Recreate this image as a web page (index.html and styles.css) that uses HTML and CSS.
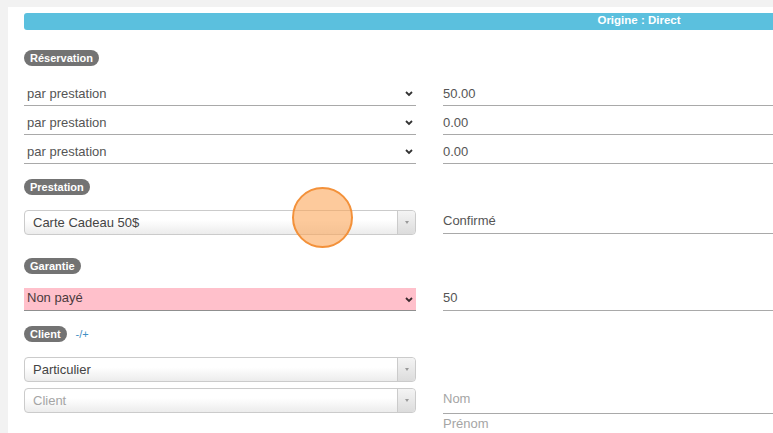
FILE: index.html
```html
<!DOCTYPE html>
<html lang="fr">
<head>
  <meta charset="UTF-8" />
  <title>Réservation</title>
  <link rel="stylesheet" href="styles.css">
</head>
<body>
  <div class="panel">
    <div class="origin"><span>Origine : Direct</span></div>

    <div class="group resa">
      <span class="tag">Réservation</span>
      <div class="grid">
        <div class="field line sel">par prestation
          <svg class="chev" width="8" height="6" viewBox="0 0 8 6"><polyline points="1,1 4,4 7,1" fill="none" stroke="#333" stroke-width="1.8"/></svg>
        </div>
        <div class="field line num">50.00</div>
        <div class="field line sel">par prestation
          <svg class="chev" width="8" height="6" viewBox="0 0 8 6"><polyline points="1,1 4,4 7,1" fill="none" stroke="#333" stroke-width="1.8"/></svg>
        </div>
        <div class="field line num">0.00</div>
        <div class="field line sel">par prestation
          <svg class="chev" width="8" height="6" viewBox="0 0 8 6"><polyline points="1,1 4,4 7,1" fill="none" stroke="#333" stroke-width="1.8"/></svg>
        </div>
        <div class="field line num">0.00</div>
      </div>
    </div>

    <div class="group presta">
      <span class="tag">Prestation</span>
      <div class="grid">
        <div class="combo"><span class="combo-text">Carte Cadeau 50$</span><span class="combo-arrow"><i></i></span></div>
        <div class="field line num mid">Confirmé</div>
      </div>
    </div>

    <div class="group garantie">
      <span class="tag">Garantie</span>
      <div class="grid">
        <div class="field line sel pink">Non payé
          <svg class="chev" width="8" height="6" viewBox="0 0 8 6"><polyline points="1,1 4,4 7,1" fill="none" stroke="#3a2a2e" stroke-width="1.8"/></svg>
        </div>
        <div class="field line num pinkrow">50</div>
      </div>
    </div>

    <div class="group client-group">
      <div class="tag-row"><span class="tag">Client</span><a class="toggle" href="#">-/+</a></div>
      <div class="grid client">
        <div class="combo first"><span class="combo-text">Particulier</span><span class="combo-arrow"><i></i></span></div>
        <div></div>
        <div class="combo"><span class="combo-text ph">Client</span><span class="combo-arrow"><i></i></span></div>
        <div class="field line num short ph">Nom</div>
        <div></div>
        <div class="field num short ph prenom">Prénom</div>
      </div>
    </div>
  </div>

  <div class="cursor"></div>
</body>
</html>
```

FILE: styles.css
```css
body {
  margin: 0;
  background: #f2f2f2;
  font-family: "Liberation Sans", Arial, sans-serif;
  color: #555;
  overflow: hidden;
}
.panel {
  margin: 7px 0 0 8px;
  width: 1300px;
  height: 440px;
  background: #fff;
  padding: 6px 0 0 16px;
  box-sizing: border-box;
}
.origin {
  width: 1230px;
  height: 17px;
  background: #5bc0de;
  border-radius: 3px 0 0 3px;
  color: #fff;
  font-size: 11.5px;
  font-weight: bold;
  line-height: 15px;
  text-align: center;
}
.group { margin-top: 15px; }
.resa { margin-top: 18px; }
.presta { margin-top: 13px; }
.garantie { margin-top: 21px; }
.client-group { margin-top: 15px; }
.tag {
  display: inline-block;
  background: #737373;
  color: #fff;
  font-size: 11px;
  font-weight: bold;
  line-height: 12px;
  padding: 2px 6px 2px;
  border-radius: 8px;
}
.tag-row { display: flex; align-items: center; gap: 9px; }
.toggle {
  color: #3f8fc4;
  font-size: 11px;
  text-decoration: none;
}
.grid {
  display: grid;
  grid-template-columns: 392px 392px;
  column-gap: 27px;
  margin-top: 15px;
}
.resa .grid { margin-top: 11px; }
.garantie .grid { margin-top: 14px; }
.field {
  position: relative;
  height: 29px;
  box-sizing: border-box;
  padding: 9px 3px 0;
  font-size: 13px;
  line-height: 16px;
  color: #555;
}
.field.num { padding-left: 0; }
.line { border-bottom: 1px solid #a9a9a9; }
.chev {
  position: absolute;
  right: 3px;
  top: 14px;
}
.mid { height: 24px; padding-top: 3px; }
.pink, .pinkrow { height: 23px; padding-top: 2px; }
.pink {
  background: #ffc0cb;
  color: #4a3a3d;
  border-bottom-color: #8f8f8f;
}
.pink .chev { top: 9px; }
.short { height: 26px; padding-top: 3px; }
.prenom { padding-top: 2px; }
.ph { color: #a5a5a5; }
.combo {
  display: flex;
  height: 25px;
  box-sizing: border-box;
  border: 1px solid #cbcbcb;
  border-radius: 4px;
  background: linear-gradient(#fff 40%, #ececec);
  font-size: 13px;
  line-height: 23px;
  color: #444;
}
.combo.first { margin-bottom: 6px; }
.combo-text { flex: 1; padding-left: 8px; }
.combo-text.ph { color: #a5a5a5; }
.combo-arrow {
  width: 17px;
  border-left: 1px solid #cbcbcb;
  border-radius: 0 4px 4px 0;
  background: linear-gradient(#f4f4f4, #dcdcdc);
  display: flex;
  align-items: center;
  justify-content: center;
}
.combo-arrow i {
  width: 0;
  height: 0;
  border-left: 2px solid transparent;
  border-right: 2px solid transparent;
  border-top: 3px solid #999;
}
.cursor {
  position: absolute;
  left: 292px;
  top: 187px;
  width: 57px;
  height: 57px;
  border: 2px solid #f3913a;
  border-radius: 50%;
  background: rgba(251, 166, 90, 0.6);
}
```
